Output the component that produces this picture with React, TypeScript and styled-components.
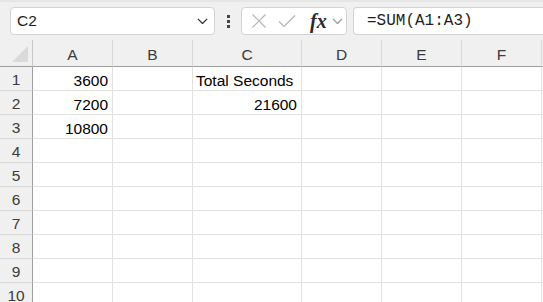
import * as React from 'react'
import styled, { createGlobalStyle } from 'styled-components'

const GlobalStyle = createGlobalStyle`
  html, body {
    margin: 0;
    padding: 0;
    background: #f0f0f0;
    overflow: hidden;
  }
  body {
    font-family: "Liberation Sans", Arial, sans-serif;
  }
`

const Page = styled.div`
  width: 543px;
  height: 302px;
  overflow: hidden;
  background: #f0f0f0;
`

const Toolbar = styled.div`
  height: 40px;
  box-sizing: border-box;
  padding: 5px 0 0 10px;
  display: flex;
  align-items: flex-start;
  border-top: 2px solid #e6e6e6;
`

const Box = styled.div<{ width?: number; grow?: boolean }>`
  box-sizing: border-box;
  height: 28px;
  ${ ({ width }) => width && `width: ${ width }px;` }
  background: #fff;
  border: 1px solid #d4d4d4;
  border-radius: 4px;
  display: flex;
  align-items: center;
  flex-shrink: 0;
  ${ ({ grow }) => grow && `flex: 1; border-right: none; border-radius: 4px 0 0 4px;` }
`

const NameText = styled.span`
  font-size: 15.5px;
  color: #1e1e1e;
  padding-left: 6px;
  flex: 1;
`

const Chevron = styled.svg`
  display: block;
  flex-shrink: 0;
`

const Grip = styled.div`
  width: 26px;
  height: 28px;
  display: flex;
  flex-direction: column;
  align-items: center;
  justify-content: center;
  gap: 2px;

  span {
    width: 3px;
    height: 3px;
    background: #444;
  }
`

const Fx = styled.span`
  font-family: "Liberation Serif", "Times New Roman", serif;
  font-style: italic;
  font-weight: bold;
  font-size: 20px;
  color: #2a2a2a;
  margin-left: 14px;
  line-height: 26px;
`

const Formula = styled.span`
  font-family: "Liberation Mono", "Courier New", monospace;
  font-size: 16px;
  color: #1e1e1e;
  padding-left: 13px;
`

const Sheet = styled.div`
  display: grid;
  grid-template-columns: 33px 80px 80px 109px 80px 80px 80px 20px;
  grid-template-rows: 27px repeat(10, 24px);
  background: #fff;
`

const Corner = styled.div`
  background: #f0f0f0;
  border-right: 1px solid #c8c8c8;
  border-bottom: 1px solid #9e9e9e;
  position: relative;

  &::after {
    content: '';
    position: absolute;
    right: 4px;
    bottom: 4px;
    border-style: solid;
    border-width: 0 0 16px 16px;
    border-color: transparent transparent #dadada transparent;
  }
`

const ColHead = styled.div`
  background: #f0f0f0;
  border-right: 1px solid #d8d8d8;
  border-bottom: 1px solid #9e9e9e;
  display: flex;
  align-items: center;
  justify-content: center;
  font-size: 15.5px;
  color: #3b3b3b;
  padding-top: 3px;
  box-sizing: border-box;
`

const RowHead = styled.div`
  background: #f0f0f0;
  border-right: 1px solid #9e9e9e;
  border-bottom: 1px solid #d8d8d8;
  display: flex;
  align-items: center;
  justify-content: center;
  font-size: 15.5px;
  color: #3b3b3b;
  padding-top: 2px;
  box-sizing: border-box;
`

const Cell = styled.div<{ align?: 'left' | 'right' }>`
  border-right: 1px solid #e1e1e1;
  border-bottom: 1px solid #e1e1e1;
  font-size: 15.5px;
  line-height: 23px;
  padding: 2px 4px 0 3px;
  box-sizing: border-box;
  color: #000;
  white-space: nowrap;
  text-align: ${ ({ align }) => align || 'left' };
  overflow: hidden;
`

const columns = ['A', 'B', 'C', 'D', 'E', 'F', 'G']

const data: Record<string, { v: string; align: 'left' | 'right' }> = {
  A1: { v: '3600', align: 'right' },
  A2: { v: '7200', align: 'right' },
  A3: { v: '10800', align: 'right' },
  C1: { v: 'Total Seconds', align: 'left' },
  C2: { v: '21600', align: 'right' },
}

const Down = ({ size = 10, color = '#333' }: { size?: number; color?: string }) => (
  <Chevron width={ size } height={ size * 0.6 } viewBox='0 0 10 6'>
    <path d='M0.8 0.8 L5 5 L9.2 0.8' fill='none' stroke={ color } strokeWidth='1.2' />
  </Chevron>
)

export default function App() {
  const rows = Array.from({ length: 10 }, (_, i) => i + 1)
  return (
    <Page>
      <GlobalStyle />
      <Toolbar>
        <Box width={ 205 }>
          <NameText>C2</NameText>
          <span style={{ marginRight: 6 }}><Down size={ 11 } /></span>
        </Box>
        <Grip><span /><span /><span /></Grip>
        <Box width={ 106 }>
          <svg width='16' height='16' viewBox='0 0 16 16' style={{ marginLeft: 9 }}>
            <path d='M1.5 1.5 L14.5 14.5 M14.5 1.5 L1.5 14.5' stroke='#b4b4b4' strokeWidth='1.2' fill='none' />
          </svg>
          <svg width='18' height='14' viewBox='0 0 18 14' style={{ marginLeft: 11 }}>
            <path d='M1 7.5 L6 12.5 L17 1.5' stroke='#b4b4b4' strokeWidth='1.2' fill='none' />
          </svg>
          <Fx>fx</Fx>
          <span style={{ marginLeft: 5 }}><Down size={ 11 } color='#999' /></span>
        </Box>
        <div style={{ width: 6 }} />
        <Box grow>
          <Formula>=SUM(A1:A3)</Formula>
        </Box>
      </Toolbar>
      <Sheet>
        <Corner />
        { columns.map(c => <ColHead key={ c }>{ c === 'G' ? '' : c }</ColHead>) }
        { rows.map(r => (
          <React.Fragment key={ r }>
            <RowHead>{ r }</RowHead>
            { columns.map(c => {
              const d = data[c + r]
              return <Cell key={ c } align={ d?.align }>{ d?.v }</Cell>
            }) }
          </React.Fragment>
        )) }
      </Sheet>
    </Page>
  )
}
